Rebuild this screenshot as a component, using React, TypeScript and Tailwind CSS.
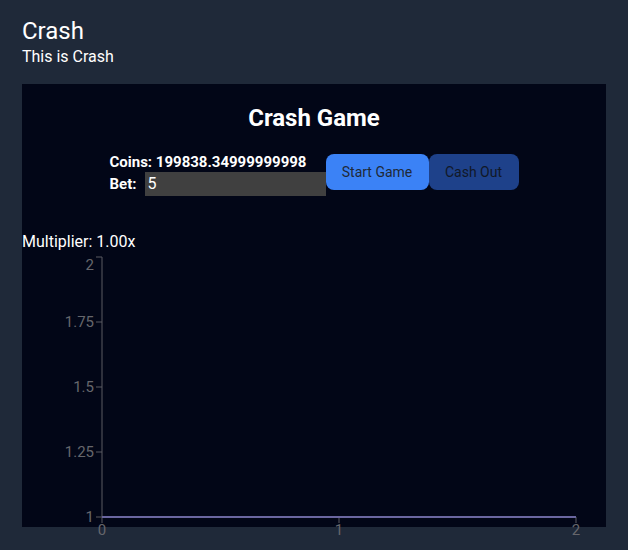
import React from "react";

const yTicks = [
  { v: "2", y: 5, ly: 13 },
  { v: "1.75", y: 70, ly: 70 },
  { v: "1.5", y: 135, ly: 135 },
  { v: "1.25", y: 200, ly: 200 },
  { v: "1", y: 265, ly: 265 },
];
const xTicks = [
  { v: "0", x: 80 },
  { v: "1", x: 317 },
  { v: "2", x: 554 },
];

export default function App() {
  return (
    <div
      className="min-h-screen bg-[#1f2939] px-[22px] pt-[17px] text-white"
      style={{ fontFamily: "Roboto, 'Noto Sans', sans-serif" }}
    >
      <h1 className="text-2xl leading-[28px]">Crash</h1>
      <p className="text-base leading-6">This is Crash</p>
      <div className="mt-[15px] h-[443px] bg-[#020617] pt-[18px]">
        <h2 className="text-center text-2xl font-bold leading-8">Crash Game</h2>
        <div className="mt-[18px] flex items-start justify-center">
          <div className="flex w-[216px] flex-col">
            <div className="text-[15px] font-bold leading-5">Coins: 199838.34999999998</div>
            <div className="flex h-6 items-center">
              <span className="text-[15px] font-bold leading-5">Bet:</span>
              <input
                className="ml-auto h-6 w-[181px] bg-[#404040] pl-[3px] text-base text-white outline-none"
                defaultValue="5"
                type="number"
              />
            </div>
          </div>
          <button className="mt-[2px] h-9 w-[103px] rounded-lg bg-[#3b82f6] text-sm text-[#1f2937]">
            Start Game
          </button>
          <button className="mt-[2px] h-9 w-[90px] rounded-lg bg-[#1e418a] text-sm text-[#111827]">
            Cash Out
          </button>
        </div>
        <div className="mt-[34px] text-base leading-6">Multiplier: 1.00x</div>
        <svg width={584} height={300} className="-mt-[2px] block overflow-visible">
          <line x1={80} y1={5} x2={80} y2={265} stroke="#5a5a62" strokeWidth={1} />
          {yTicks.map((t) => (
            <g key={t.v}>
              <line x1={74} y1={t.y} x2={80} y2={t.y} stroke="#5a5a62" />
              <text
                x={72}
                y={t.ly}
                dy="0.355em"
                textAnchor="end"
                fill="#66666c"
                fontSize={15}
              >
                {t.v}
              </text>
            </g>
          ))}
          <line x1={80} y1={265} x2={554} y2={265} stroke="#5a5a62" />
          {xTicks.map((t) => (
            <g key={t.v}>
              <line x1={t.x} y1={265} x2={t.x} y2={271} stroke="#5a5a62" />
              <text x={t.x} y={278} dy="0.355em" textAnchor="middle" fill="#66666c" fontSize={15}>
                {t.v}
              </text>
            </g>
          ))}
          <line x1={80} y1={265} x2={554} y2={265} stroke="#6a66a0" strokeWidth={2} />
        </svg>
      </div>
    </div>
  );
}
